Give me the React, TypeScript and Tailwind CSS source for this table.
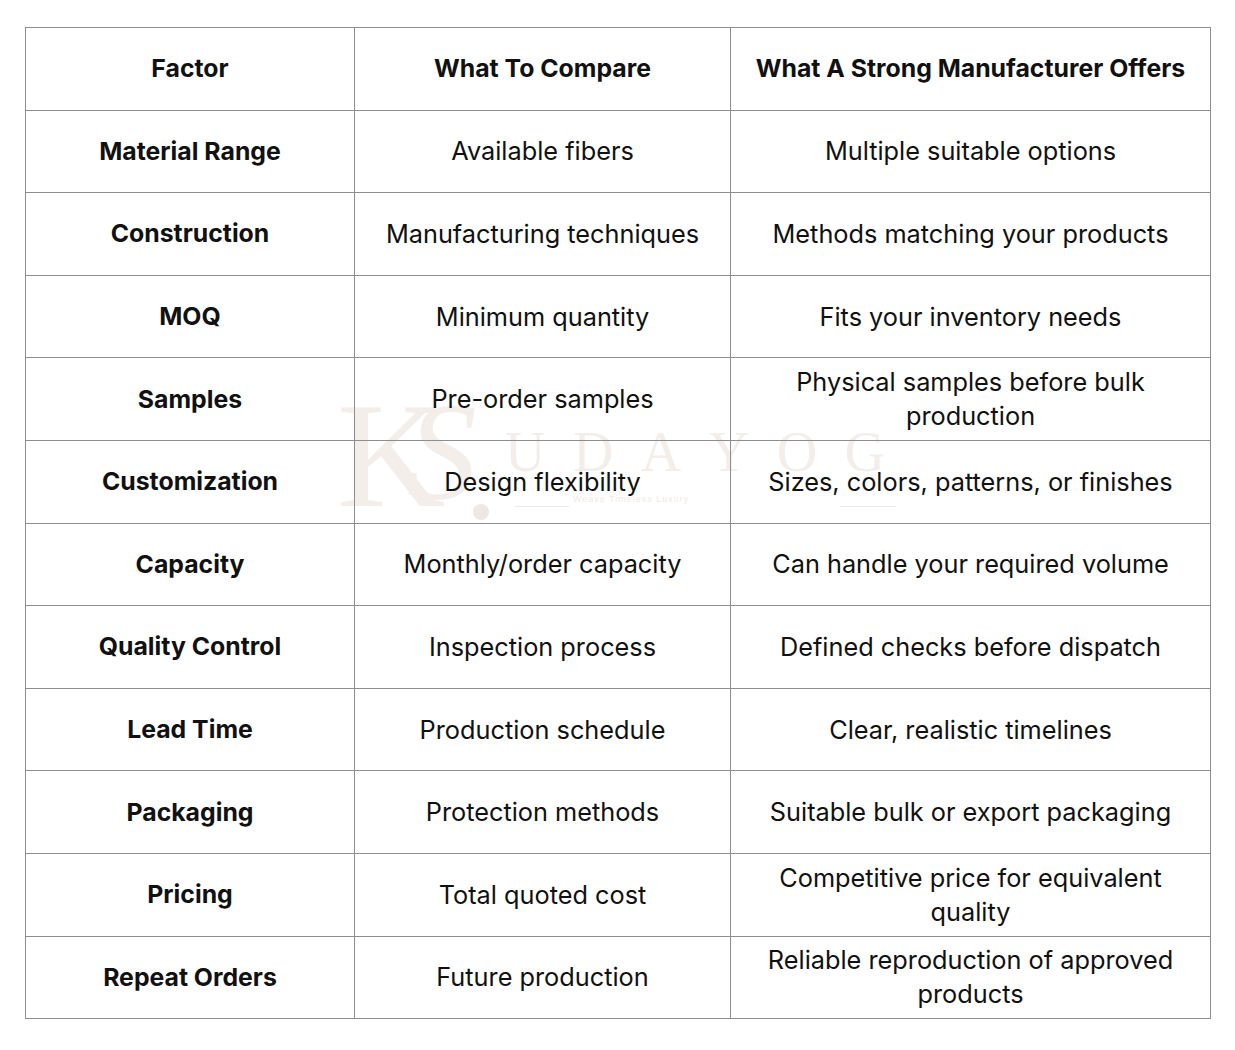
const rows: [string, React.ReactNode, React.ReactNode][] = [
  ["Material Range", "Available fibers", "Multiple suitable options"],
  ["Construction", "Manufacturing techniques", "Methods matching your products"],
  ["MOQ", "Minimum quantity", "Fits your inventory needs"],
  [
    "Samples",
    "Pre-order samples",
    <>
      Physical samples before bulk
      <br />
      production
    </>,
  ],
  ["Customization", "Design flexibility", "Sizes, colors, patterns, or finishes"],
  ["Capacity", "Monthly/order capacity", "Can handle your required volume"],
  ["Quality Control", "Inspection process", "Defined checks before dispatch"],
  ["Lead Time", "Production schedule", "Clear, realistic timelines"],
  ["Packaging", "Protection methods", "Suitable bulk or export packaging"],
  [
    "Pricing",
    "Total quoted cost",
    <>
      Competitive price for equivalent
      <br />
      quality
    </>,
  ],
  [
    "Repeat Orders",
    "Future production",
    <>
      Reliable reproduction of approved
      <br />
      products
    </>,
  ],
];

// faint brand mark sitting behind the table
function Watermark() {
  return (
    <div className="pointer-events-none absolute left-[315px] top-[378px] h-[160px] w-[600px] select-none text-[#f3eeea]">
      <div className="absolute left-[22px] top-[2px] font-['Liberation_Serif',serif] text-[150px] leading-none">
        K
      </div>
      <div className="absolute left-[92px] top-[4px] font-['Liberation_Serif',serif] text-[140px] italic leading-none">
        S
      </div>
      <div className="absolute left-[158px] top-[126px] h-[16px] w-[16px] rounded-full bg-[#efe8e2]" />
      <div className="absolute left-[190px] top-[46px] flex w-[380px] justify-between font-['Liberation_Serif',serif] text-[56px] font-light leading-none">
        <span>U</span>
        <span>D</span>
        <span>A</span>
        <span>Y</span>
        <span>O</span>
        <span>G</span>
      </div>
      <div className="absolute left-[200px] top-[128px] h-px w-[54px] bg-[#efeae5]" />
      <div className="absolute left-[258px] top-[115px] font-['Liberation_Sans',sans-serif] text-[9px] tracking-[1px] text-[#efe9e3]">
        Weave Timeless Luxury
      </div>
      <div className="absolute left-[525px] top-[128px] h-px w-[56px] bg-[#efeae5]" />
    </div>
  );
}

export default function App() {
  return (
    <div className="relative min-h-[1050px] w-[1235px] bg-white pl-[25px] pt-[27px] font-['Inter',sans-serif] text-[25.3px] text-[#111]">
      <Watermark />
      <table className="relative w-[1185px] table-fixed border-collapse">
        <colgroup>
          <col className="w-[329px]" />
          <col className="w-[376px]" />
          <col className="w-[480px]" />
        </colgroup>
        <thead>
          <tr className="h-[82.6px]">
            <th className="border border-[#8e8e8e] text-[24.8px] font-bold">Factor</th>
            <th className="border border-[#8e8e8e] text-[24.8px] font-bold">What To Compare</th>
            <th className="border border-[#8e8e8e] text-[24.8px] font-bold">
              What A Strong Manufacturer Offers
            </th>
          </tr>
        </thead>
        <tbody>
          {rows.map(([factor, compare, offer]) => (
            <tr key={factor} className="h-[82.6px]">
              <td className="border border-[#8e8e8e] text-center text-[24.8px] font-bold">
                {factor}
              </td>
              <td className="border border-[#8e8e8e] text-center">{compare}</td>
              <td className="border border-[#8e8e8e] text-center leading-[34px]">
                {offer}
              </td>
            </tr>
          ))}
        </tbody>
      </table>
    </div>
  );
}
